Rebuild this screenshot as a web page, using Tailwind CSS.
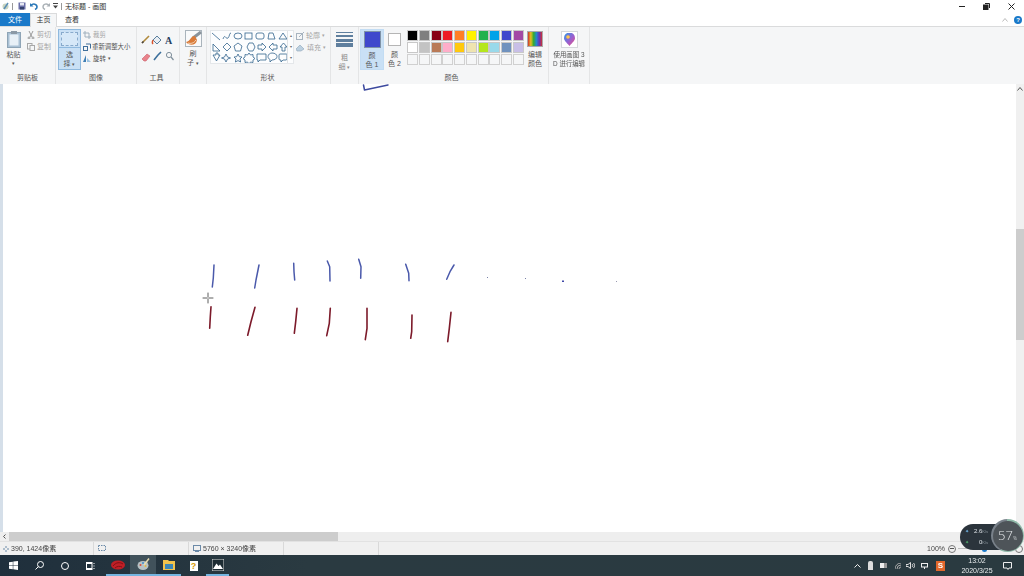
<!DOCTYPE html>
<html lang="zh-CN">
<head>
  <meta charset="UTF-8" />
  <title>无标题 - 画图</title>
  <script src="https://cdn.jsdelivr.net/npm/@tailwindcss/browser@4"></script>
</head>
<body class="bg-white overflow-hidden">
<div class="relative w-[1024px] h-[576px] flex flex-col overflow-hidden blur-[0.4px] font-['Liberation_Sans','Noto_Sans_CJK_SC',sans-serif] text-[7px] leading-[9px] text-[#555]">

  <!-- title bar -->
  <div class="h-[13px] flex items-center bg-white shrink-0 pb-[1px]">
    <svg class="ml-[2px] w-[7px] h-[9px]" viewBox="0 0 7 9"><circle cx="3.500" cy="4.500" r="3" fill="#c9d4c0"/><path d="M2 7 6 1" stroke="#5b8fb5" stroke-width="1.500"/></svg>
    <div class="ml-[3px] w-px h-[7px] bg-[#999]"></div>
    <svg class="ml-[5px] w-[8px] h-[8px]" viewBox="0 0 8 8"><rect x=".5" y=".5" width="7" height="7" fill="#6a6fa8"/><rect x="2" y="1" width="4" height="2.500" fill="#e5e7f2"/><rect x="2" y="5" width="4" height="2.500" fill="#33406e"/></svg>
    <svg class="ml-[4px] w-[8px] h-[8px]" viewBox="0 0 8 8" fill="none"><path d="M1 3.500C3 1 7 2 7 5 7 6 6 7 5 7.500" stroke="#2a78b8" stroke-width="1.600"/><path d="M0 1v3.500h3.500z" fill="#2a78b8"/></svg>
    <svg class="ml-[4px] w-[8px] h-[8px]" viewBox="0 0 8 8" fill="none"><path d="M7 3.500C5 1 1 2 1 5 1 6 2 7 3 7.500" stroke="#a9b0b5" stroke-width="1.400"/><path d="M8 1v3.500H4.500z" fill="#a9b0b5"/></svg>
    <svg class="ml-[3px] w-[5px] h-[6px]" viewBox="0 0 5 6"><path d="M0 .5h5" stroke="#444"/><path d="M0 2.500h5L2.500 5.500z" fill="#444"/></svg>
    <div class="ml-[3px] w-px h-[7px] bg-[#999]"></div>
    <span class="ml-[3px] text-[#333]">无标题 - 画图</span>
    <div class="ml-auto flex items-center">
      <div class="w-[6px] h-px bg-[#222] mr-[18px]"></div>
      <svg class="w-[7px] h-[7px] mr-[18px]" viewBox="0 0 7 7" fill="none" stroke="#222"><rect x=".5" y="2" width="4.500" height="4.500" fill="#222"/><path d="M2 .5h4.500V5"/></svg>
      <svg class="w-[7px] h-[7px] mr-[9px]" viewBox="0 0 7 7" stroke="#222"><path d="m.5.500 6 6m0-6-6 6"/></svg>
    </div>
  </div>

  <!-- tabs -->
  <div class="h-[13px] flex items-stretch bg-white shrink-0 relative z-10 text-[#333]">
    <div class="w-[30px] bg-[#1a79c9] text-white flex items-center justify-center pb-[1px]">文件</div>
    <div class="w-[27px] h-[14px] bg-[#f5f6f7] border-x border-t border-[#dadbdc] flex items-center justify-center pb-[2px]">主页</div>
    <div class="w-[30px] flex items-center justify-center pb-[1px]">查看</div>
    <div class="ml-auto flex items-center">
      <svg class="w-[6px] h-[4px] mr-[6px]" viewBox="0 0 6 4" fill="none" stroke="#bbb"><path d="m.5 3.500 2.500-3 2.500 3"/></svg>
      <div class="w-[8px] h-[8px] mr-[2px] rounded-full bg-[#1a79c9] text-white text-[6px] leading-[8px] text-center font-bold">?</div>
    </div>
  </div>

  <!-- ribbon -->
  <div class="h-[58px] flex bg-[#f5f6f7] border-t border-[#dadbdc] shrink-0">

    <div class="w-[56px] border-r border-[#e4e5e6] flex flex-col">
      <div class="h-[45px] flex">
        <div class="w-[27px] flex flex-col items-center pt-[4px]">
          <svg class="w-[14px] h-[17px]" viewBox="0 0 14 17"><rect x=".5" y="1.500" width="13" height="15" fill="#a9c0d4" stroke="#8ea4b6"/><rect x="2.500" y="3.500" width="9" height="11" fill="#e8f0f7"/><rect x="4" y="0" width="6" height="3" fill="#8b99a6"/></svg>
          <span class="mt-[2px]">粘贴</span>
          <span class="text-[5px]">▾</span>
        </div>
        <div class="flex flex-col pt-[3px] gap-[3px] text-[#a5a5a5]">
          <div class="flex items-center gap-[2px] h-[9px]"><svg class="w-[8px] h-[8px]" viewBox="0 0 8 8" fill="none" stroke="#9a9a9a"><path d="m2 0 3 6M6 0 3 6"/><circle cx="2" cy="7" r="1"/><circle cx="6" cy="7" r="1"/></svg>剪切</div>
          <div class="flex items-center gap-[2px] h-[9px]"><svg class="w-[8px] h-[8px]" viewBox="0 0 8 8" fill="#f5f6f7" stroke="#a8a8a8"><rect x=".5" y=".5" width="4.500" height="5.500"/><rect x="3" y="2.500" width="4.500" height="5"/></svg>复制</div>
        </div>
      </div>
      <div class="text-center mt-[1px]">剪贴板</div>
    </div>

    <div class="w-[81px] border-r border-[#e4e5e6] flex flex-col">
      <div class="h-[45px] flex">
        <div class="ml-[2px] mt-[2px] w-[23px] h-[41px] bg-[#c9e0f5] border border-[#8fb9de] flex flex-col items-center">
          <div class="w-full h-[19px] border-b border-[#8fb9de] flex items-center justify-center">
            <div class="w-[17px] h-[14px] bg-[#d6e8f8] border border-dashed border-[#88aacc]"></div>
          </div>
          <span class="mt-[2px]">选</span>
          <span>择 <span class="text-[5px]">▾</span></span>
        </div>
        <div class="ml-[2px] flex flex-col pt-[3px] gap-[3px] text-[6.4px]">
          <div class="flex items-center gap-[2px] h-[9px] text-[#a5a5a5]"><svg class="w-[8px] h-[8px]" viewBox="0 0 8 8" fill="none" stroke="#9fb0bd"><path d="M2 0v6h6M0 2h6v6"/></svg>裁剪</div>
          <div class="flex items-center gap-[1px] h-[9px] whitespace-nowrap"><svg class="w-[8px] h-[8px]" viewBox="0 0 8 8" fill="none" stroke="#3f6f9b"><rect x=".5" y="3.500" width="4" height="4"/><path d="M3 1h4.500v4.500"/></svg>重新调整大小</div>
          <div class="flex items-center gap-[2px] h-[9px]"><svg class="w-[8px] h-[8px]" viewBox="0 0 8 8"><path d="M3 0v7H0z" fill="#3f7fb5"/><path d="M4 3l4 4H4z" fill="#9cc2e0"/></svg>旋转 <span class="text-[5px]">▾</span></div>
        </div>
      </div>
      <div class="text-center mt-[1px]">图像</div>
    </div>

    <div class="w-[43px] border-r border-[#e4e5e6] flex flex-col">
      <div class="h-[45px] pl-[4px] pt-[7px]">
        <svg class="w-[38px] h-[28px]" viewBox="0 0 38 28" fill="none">
          <path d="m1 9 7-7" stroke="#b08a3c" stroke-width="1.600"/><path d="m1 9 1.500-1.500" stroke="#444" stroke-width="1.600"/>
          <path d="m12 6 4-4 4 4-4 4z" fill="#e8edf2" stroke="#5a7f9e"/><path d="M12 6c-1 2-1 3 0 4" stroke="#d9532c" stroke-width="1.400"/>
          <path d="M1 25l5-5 3 2-4 5H3z" fill="#e9838c" stroke="#c9606a" stroke-width=".6"/>
          <path d="m13 26 4-5M17 21l3-3" stroke="#3b6f9c" stroke-width="1.600"/>
          <circle cx="28" cy="21" r="2.600" stroke="#7f8f9c"/><path d="m30 23 2.500 3" stroke="#7f8f9c" stroke-width="1.200"/>
        </svg>
      </div>
      <div class="text-center mt-[1px] -ml-[3px]">工具</div>
      <div class="absolute left-[165px] top-[36px] font-bold text-[10px] leading-[10px] font-['Liberation_Serif',serif] text-[#26405e]">A</div>
    </div>

    <div class="w-[27px] border-r border-[#e4e5e6] flex flex-col items-center pt-[3px]">
      <svg class="w-[17px] h-[17px]" viewBox="0 0 17 17"><rect x=".5" y=".5" width="16" height="16" fill="#f9fafb" stroke="#aab4bc"/><path d="M16 2 8 8" stroke="#8a949c" stroke-width="3"/><path d="M10 6C5 6 6 11 1 12c3 4 10 4 11-2z" fill="#d97b3a"/><path d="M3 13c3 1 6 0 8-3" stroke="#f4d9bd" fill="none"/></svg>
      <span class="mt-[2px]">刷</span>
      <span>子 <span class="text-[5px]">▾</span></span>
    </div>

    <div class="w-[124px] border-r border-[#e4e5e6] flex flex-col">
      <div class="h-[45px] flex pt-[3px] pl-[3px]">
        <div class="w-[84px] h-[34px] flex bg-[#fcfdfe] border border-[#e4e7ea]">
          <svg class="w-[76px] h-[32px]" viewBox="0 0 76 32" fill="none" stroke="#33648e" stroke-width=".8">
            <path d="m1 2 8 7M12 8c2-6 3 1 5-1s1-5 3-5"/><ellipse cx="27" cy="5" rx="4" ry="3"/><rect x="34" y="2" width="7" height="6"/><rect x="45" y="2" width="8" height="6" rx="2"/><path d="m57 8 1-6h4l2 6zM68 8l4-6 4 6z"/>
            <path d="M2 20V13l7 7zM16 12l4 4-4 4-4-4zM27 12l4 3-1.500 5h-5L23 15zM38 12h4l2 4-2 4h-4l-2-4zM47 14h4v-2l4 4-4 4v-2h-4zM66 14h-4v-2l-4 4 4 4v-2h4zM69 16l3.500-4 3.500 4h-2v4h-3v-4z"/>
            <path d="M2 24h3v-2h2v2h2l-3.500 6zM15 23l1.500 3 3 1-3 1-1.500 3-1.500-3-3-1 3-1zM27 23l1.300 2.700 2.700.3-2 2 .6 3-2.600-1.400-2.600 1.400.6-3-2-2 2.700-.3zM38 22l1.500 2 2.500-.5 0 2.500 2 1.500-2 1.500 0 2.500-2.500-.5-1.500 2-1.500-2-2.500.5 0-2.500-2-1.500 2-1.500 0-2.500 2.500.5z"/>
            <path d="M46 23h9v6h-6l-2 2v-2h-1zM61 22c3 0 5 1.500 5 3.500S64 29 61 29l-2 2v-2.500c-1-.5-2-1.500-2-3 0-2 2-3.500 4-3.500zM69 23h6c1 0 1 .5 1 1v4c0 .5-.5 1-1 1h-3l-2 2v-2h-1c-.5 0-1-.5-1-1v-4c0-.500.500-1 1-1z"/>
          </svg>
          <div class="w-[6px] border-l border-[#dfe2e5] flex flex-col items-center justify-between text-[4px] leading-[10px] text-[#666]"><span>▴</span><span>▾</span><span>▾</span></div>
        </div>
        <div class="ml-[2px] flex flex-col pt-[1px] gap-[3px] text-[#a5a5a5] whitespace-nowrap">
          <div class="flex items-center gap-[2px] h-[9px]"><svg class="w-[8px] h-[8px]" viewBox="0 0 8 8" fill="none" stroke="#a6b3bf"><rect x=".5" y="1.500" width="6" height="6"/><path d="m3 5 5-5"/></svg>轮廓 <span class="text-[5px]">▾</span></div>
          <div class="flex items-center gap-[2px] h-[9px]"><svg class="w-[9px] h-[8px]" viewBox="0 0 9 8"><path d="m4 1 4 4-3 2H1L0 5z" fill="#bcd0e0" stroke="#8da5b8" stroke-width=".6"/></svg>填充 <span class="text-[5px]">▾</span></div>
        </div>
      </div>
      <div class="text-center mt-[1px] -ml-[2px]">形状</div>
    </div>

    <div class="w-[28px] border-r border-[#e4e5e6] flex flex-col items-center pt-[5px] text-[#8a8a8a]">
      <div class="w-[17px] h-px bg-[#5f7f9e]"></div>
      <div class="w-[17px] h-[2px] mt-[2px] bg-[#5f7f9e]"></div>
      <div class="w-[17px] h-[3px] mt-[2px] bg-[#5f7f9e]"></div>
      <div class="w-[17px] h-[4px] mt-[1px] bg-[#5f7f9e]"></div>
      <span class="mt-[6px]">粗</span>
      <span>细 <span class="text-[5px]">▾</span></span>
    </div>

    <div class="w-[190px] border-r border-[#e4e5e6] flex flex-col">
      <div class="h-[45px] flex">
        <div class="ml-[1px] mt-[2px] w-[24px] h-[41px] bg-[#c9e0f5] border border-[#c2dcf3] flex flex-col items-center pt-[1px]">
          <div class="w-[17px] h-[17px] bg-[#3f48cc] border border-[#7f93a8]"></div>
          <span class="mt-[3px]">颜</span>
          <span>色 1</span>
        </div>
        <div class="w-[21px] mt-[2px] flex flex-col items-center pt-[4px]">
          <div class="w-[13px] h-[13px] bg-white border border-[#b5b5b5]"></div>
          <span class="mt-[4px]">颜</span>
          <span>色 2</span>
        </div>
        <div class="ml-[2px] mt-[3px] w-[117px] h-[35px] grid grid-cols-10 gap-[0.8px]">
          <div class="bg-[#000000] border border-[#c8c8c8]"></div><div class="bg-[#7f7f7f] border border-[#c8c8c8]"></div><div class="bg-[#880015] border border-[#c8c8c8]"></div><div class="bg-[#ed1c24] border border-[#c8c8c8]"></div><div class="bg-[#ff7f27] border border-[#c8c8c8]"></div><div class="bg-[#fff200] border border-[#c8c8c8]"></div><div class="bg-[#22b14c] border border-[#c8c8c8]"></div><div class="bg-[#00a2e8] border border-[#c8c8c8]"></div><div class="bg-[#3f48cc] border border-[#c8c8c8]"></div><div class="bg-[#a349a4] border border-[#c8c8c8]"></div>
          <div class="bg-[#ffffff] border border-[#c8c8c8]"></div><div class="bg-[#c3c3c3] border border-[#c8c8c8]"></div><div class="bg-[#b97a57] border border-[#c8c8c8]"></div><div class="bg-[#ffaec9] border border-[#c8c8c8]"></div><div class="bg-[#ffc90e] border border-[#c8c8c8]"></div><div class="bg-[#efe4b0] border border-[#c8c8c8]"></div><div class="bg-[#b5e61d] border border-[#c8c8c8]"></div><div class="bg-[#99d9ea] border border-[#c8c8c8]"></div><div class="bg-[#7092be] border border-[#c8c8c8]"></div><div class="bg-[#c8bfe7] border border-[#c8c8c8]"></div>
          <div class="border border-[#d0d0d0]"></div><div class="border border-[#d0d0d0]"></div><div class="border border-[#d0d0d0]"></div><div class="border border-[#d0d0d0]"></div><div class="border border-[#d0d0d0]"></div><div class="border border-[#d0d0d0]"></div><div class="border border-[#d0d0d0]"></div><div class="border border-[#d0d0d0]"></div><div class="border border-[#d0d0d0]"></div><div class="border border-[#d0d0d0]"></div>
        </div>
        <div class="ml-[3px] mt-[4px] flex flex-col items-center">
          <div class="w-[16px] h-[16px] border border-[#aaa] bg-[linear-gradient(90deg,#c33,#e8c020,#3a3,#28c,#63b,#c33)]"></div>
          <span class="mt-[3px]">编辑</span>
          <span>颜色</span>
        </div>
      </div>
      <div class="text-center mt-[1px] -ml-[4px]">颜色</div>
    </div>

    <div class="w-[41px] border-r border-[#e4e5e6] flex flex-col items-center pt-[4px] text-center whitespace-nowrap text-[6.4px]">
      <div class="w-[17px] h-[17px] bg-white border border-[#d5d8db] flex items-center justify-center">
        <svg class="w-[11px] h-[13px]" viewBox="0 0 11 13"><defs><linearGradient id="pin" x1="0" y1="0" x2="1" y2="1"><stop offset="0" stop-color="#2d9be8"/><stop offset=".55" stop-color="#9a5fd0"/><stop offset="1" stop-color="#f0507a"/></linearGradient></defs><path d="M5.500 13C2 9 0 7.500 0 5a5.500 5.500 0 0 1 11 0c0 2.500-2 4-5.500 8z" fill="url(#pin)"/><circle cx="4" cy="4" r="1.800" fill="#ffc54a"/></svg>
      </div>
      <span class="mt-[2px]">使用画图 3</span>
      <span>D 进行编辑</span>
    </div>
  </div>

  <!-- canvas -->
  <div class="flex-1 flex min-h-0">
    <div class="relative flex-1 bg-white">
      <div class="absolute left-0 top-0 bottom-0 w-[3px] bg-[#d5dfe9]"></div>
      <svg class="absolute inset-0 w-[1016px] h-[448px]" viewBox="0 84 1016 448" fill="none" stroke-linecap="round" stroke-linejoin="round">
        <g stroke="#4a59ab" stroke-width="1.500">
          <path d="M363.500 85 364.500 90 388 85" stroke="#3d4a9f"/>
          <path d="M214 265 213.300 278 212.300 287"/>
          <path d="M259 265 256 280 254.700 288"/>
          <path d="M293.700 263.300 294 271.700 294.700 280"/>
          <path d="M327.300 261 329.700 266.700 330 281"/>
          <path d="M358.700 259.300 361 266.700 360.700 278.300"/>
          <path d="M405.700 264.300 408.700 273.300 409 280.700"/>
          <path d="M454 265 450 271.700 446.700 279.300"/>
        </g>
        <g stroke="#7c1a2a" stroke-width="1.600">
          <path d="M211 306.700 210.300 316.700 209.700 328.300"/>
          <path d="M255 307.300 251 321.700 247.700 335.300"/>
          <path d="M297 308.300 295.700 321.700 294.300 333.300"/>
          <path d="M330.300 308.300 329.300 323.300 326.700 335.700"/>
          <path d="M367 308.300 367 328.300 365.300 339.700"/>
          <path d="M412 315 411.700 331.700 410.700 338.300"/>
          <path d="M451 312.300 449.300 328.300 447.700 341.700"/>
        </g>
        <rect x="487" y="277" width="1" height="1" fill="#7880a8"/>
        <rect x="525" y="278" width="1" height="1" fill="#7880a8"/>
        <rect x="562" y="280.500" width="2" height="1.500" fill="#3f48a8"/>
        <rect x="616" y="281" width="1" height="1" fill="#9a9ab0"/>
        <path d="M203 298h4m2 0h4M208 293v4m0 2v4" stroke="#333" stroke-width=".8"/>
      </svg>
    </div>
    <div class="relative w-[8px] bg-[#f0f0f0]">
      <svg class="absolute left-[1px] top-[3px] w-[6px] h-[4px]" viewBox="0 0 6 4" fill="none" stroke="#555"><path d="m.5 3.500 2.500-3 2.500 3"/></svg>
      <div class="absolute left-0 right-0 top-[145px] h-[111px] bg-[#cdcdcd]"></div>
    </div>
  </div>

  <!-- horizontal scrollbar -->
  <div class="h-[9px] flex bg-[#eeeeee] shrink-0">
    <div class="w-[9px] flex items-center justify-center">
      <svg class="w-[3px] h-[5px]" viewBox="0 0 3 5" fill="none" stroke="#555"><path d="m2.500 .5-2 2 2 2"/></svg>
    </div>
    <div class="w-[329px] bg-[#cdcdcd]"></div>
  </div>

  <!-- status bar -->
  <div class="h-[14px] flex items-center bg-[#f0f0f0] border-t border-[#e2e2e2] text-[#444] shrink-0">
    <div class="w-[94px] h-full flex items-center border-r border-[#d9d9d9] pl-[3px] gap-[2px]">
      <svg class="w-[6px] h-[6px]" viewBox="0 0 6 6" stroke="#6b8aa8"><path d="M0 3h2m2 0h2M3 0v2m0 2v2"/></svg>390, 1424像素
    </div>
    <div class="w-[95px] h-full flex items-center border-r border-[#d9d9d9] pl-[4px]">
      <svg class="w-[8px] h-[7px]" viewBox="0 0 8 7" fill="none" stroke="#6b8aa8" stroke-dasharray="1.500 1"><rect x=".5" y=".5" width="7" height="5"/></svg>
    </div>
    <div class="w-[95px] h-full flex items-center border-r border-[#d9d9d9] pl-[4px] gap-[2px]">
      <svg class="w-[8px] h-[7px]" viewBox="0 0 8 7" fill="none" stroke="#6b8aa8"><rect x=".5" y=".5" width="7" height="5"/><path d="M2 6.500h4"/></svg>5760 × 3240像素
    </div>
    <div class="w-[95px] h-full border-r border-[#d9d9d9]"></div>
    <div class="ml-auto flex items-center">
      <span>100%</span>
      <div class="ml-[3px] w-[8px] h-[8px] rounded-full border border-[#777] flex items-center justify-center"><div class="w-[4px] h-px bg-[#555]"></div></div>
      <div class="relative w-[56px] h-px ml-[2px] bg-[#bbb]">
        <div class="absolute left-[24px] -top-[4px] w-[5px] h-[8px] bg-[#1a79c9] rounded-b-[3px]"></div>
      </div>
      <div class="ml-[1px] mr-[1px] w-[8px] h-[8px] rounded-full border border-[#777]"></div>
    </div>
  </div>

  <!-- taskbar -->
  <div class="h-[21px] flex items-stretch bg-[linear-gradient(90deg,#1f2f3c,#2a3a41_30%,#2a3a40)] text-white shrink-0">
    <div class="w-[27px] flex items-center justify-center">
      <svg class="w-[9px] h-[9px]" viewBox="0 0 9 9" fill="#fff"><path d="M0 1.300 3.800.7v3.500H0zM4.300.6 9 0v4.200H4.300zM0 4.700h3.800v3.600L0 7.700zM4.300 4.700H9V9l-4.700-.7z"/></svg>
    </div>
    <div class="w-[25px] flex items-center justify-center">
      <svg class="w-[9px] h-[9px]" viewBox="0 0 9 9" fill="none" stroke="#fff"><circle cx="5.500" cy="3.500" r="3"/><path d="M3.300 5.700.5 8.500"/></svg>
    </div>
    <div class="w-[25px] flex items-center justify-center">
      <div class="w-[8px] h-[8px] rounded-full border border-white"></div>
    </div>
    <div class="w-[27px] flex items-center justify-center">
      <svg class="w-[9px] h-[8px]" viewBox="0 0 9 8" fill="none" stroke="#fff"><rect x=".5" y="1.500" width="5.500" height="5"/><path d="M0 .5h6.500M0 7.500h6.500M8 1v1M8 3.500v1M8 6v1"/></svg>
    </div>
    <div class="w-[24px] ml-[2px] flex items-center justify-center border-b-2 border-[#75b5e0]">
      <svg class="w-[14px] h-[10px]" viewBox="0 0 14 10"><ellipse cx="7" cy="5" rx="7" ry="4.500" fill="#c01f26"/><path d="M2 6c3-4 7-4 10-2M4 8c2-2 5-2 7-1" stroke="#801015" fill="none"/></svg>
    </div>
    <div class="w-[26px] flex items-center justify-center bg-[#41525b] border-b-2 border-[#75b5e0]">
      <svg class="w-[13px] h-[13px]" viewBox="0 0 13 13"><ellipse cx="6" cy="7.500" rx="5.500" ry="4.500" fill="#b7c2c4"/><circle cx="3.500" cy="7" r="1" fill="#d94c3a"/><circle cx="6" cy="5" r="1" fill="#3f8fd0"/><circle cx="8.500" cy="8" r="1" fill="#e8b93a"/><path d="M7 7 12 .5" stroke="#e8dcb0" stroke-width="1.500"/></svg>
    </div>
    <div class="w-[25px] flex items-center justify-center border-b-2 border-[#75b5e0]">
      <svg class="w-[12px] h-[11px]" viewBox="0 0 12 11"><path d="M0 1h5l1 1h6v9H0z" fill="#f1c24b"/><rect x="2" y="5" width="8" height="5" fill="#3c86b6"/></svg>
    </div>
    <div class="w-[25px] flex items-center justify-center">
      <div class="w-[8px] h-[10px] bg-white text-[#d69a00] text-[9px] leading-[10px] font-bold text-center">?</div>
    </div>
    <div class="w-[23px] flex items-center justify-center border-b-2 border-[#75b5e0]">
      <svg class="w-[12px] h-[12px]" viewBox="0 0 12 12"><rect width="12" height="12" fill="#1d2c33" stroke="#ddd"/><path d="M1 10 4.500 4.500 6.500 7 8 5.500 11 10z" fill="#fff"/></svg>
    </div>

    <div class="ml-auto flex items-center">
      <svg class="w-[7px] h-[4px] mr-[7px]" viewBox="0 0 7 4" fill="none" stroke="#eee"><path d="m.5 3.500 3-3 3 3"/></svg>
      <div class="w-[5px] h-[9px] rounded-t-[2px] bg-[#ddd] mr-[7px]"></div>
      <div class="w-[7px] h-[5px] bg-[#eee] border-r-[3px] border-[#999] mr-[8px]"></div>
      <svg class="w-[7px] h-[6px] mr-[4px]" viewBox="0 0 7 6" fill="none" stroke="#aaa"><path d="M0 6a6 6 0 0 1 6-6M2 6a4 4 0 0 1 4-4M4 6a2 2 0 0 1 2-2"/></svg>
      <svg class="w-[9px] h-[7px] mr-[6px]" viewBox="0 0 9 7" fill="none" stroke="#ddd"><path d="M0 2.500h2L4.500.5v6L2 4.500H0zM6 2c1 1 1 2 0 3M7.500 1c1.500 1.500 1.500 3.500 0 5"/></svg>
      <svg class="w-[7px] h-[7px] mr-[8px]" viewBox="0 0 7 7" fill="none" stroke="#eee"><rect x=".5" y="1.500" width="6" height="3.500"/><path d="M3.500 5v2"/></svg>
      <div class="w-[9px] h-[10px] bg-[#e2672b] text-white text-[8px] leading-[10px] font-bold text-center mr-[12px]">S</div>
      <div class="w-[40px] flex flex-col items-center text-[7px] leading-[10px] text-[#e8eced]">
        <span>13:02</span>
        <span class="whitespace-nowrap">2020/3/25</span>
      </div>
      <svg class="w-[9px] h-[8px] ml-[6px] mr-[12px]" viewBox="0 0 9 8" fill="none" stroke="#eee"><path d="M.5.500h8v5.500H6L5 7.500 4 6H.5z"/></svg>
    </div>
  </div>

  <!-- network speed widget -->
  <div class="absolute left-[960px] top-[524px] w-[62px] h-[26px] rounded-full bg-[#2b343c] text-[#dfe4e8] text-[6px] leading-[9px]">
    <div class="absolute left-[5px] top-[3px] flex items-center gap-[3px]"><span class="text-[#6fb1e0] text-[5px]">✦</span><span class="w-[16px] text-right">2.6<span class="text-[4px] text-[#8a949c]">K/s</span></span></div>
    <div class="absolute left-[5px] top-[14px] flex items-center gap-[3px]"><span class="text-[#4fa868] text-[5px]">✦</span><span class="w-[16px] text-right">0<span class="text-[4px] text-[#8a949c]">K/s</span></span></div>
  </div>
  <div class="absolute left-[991px] top-[519px] w-[33px] h-[33px] rounded-full p-[1.500px] bg-[conic-gradient(#8fb8a8_0_57%,#79818a_57%_100%)]">
    <div class="w-full h-full rounded-full bg-[#4e5459] flex items-center justify-center text-[#e3e6e8] text-[13px] leading-[13px] font-light font-['Open_Sans',sans-serif]">
      57<span class="text-[5px] mt-[5px]">%</span>
    </div>
  </div>
</div>
</body>
</html>
